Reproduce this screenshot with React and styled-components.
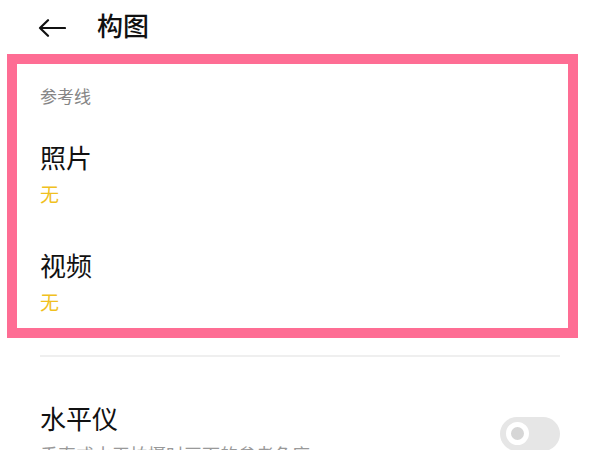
import styled, { createGlobalStyle } from "styled-components";

const GlobalStyle = createGlobalStyle`
  html, body {
    margin: 0;
    padding: 0;
    background: #ffffff;
  }
  body {
    font-family: "Noto Sans CJK SC", "Noto Sans", sans-serif;
    color: #111111;
    overflow: hidden;
  }
`;

const Page = styled.div`
  width: 600px;
  height: 450px;
  overflow: hidden;
  background: #ffffff;
`;

const Header = styled.header`
  height: 54px;
  display: flex;
  align-items: center;
  padding-left: 38px;
  gap: 31px;
  box-sizing: border-box;
`;

const BackButton = styled.button`
  display: flex;
  align-items: center;
  padding: 0;
  margin-top: 2px;
  border: none;
  background: none;
  cursor: pointer;
`;

const Title = styled.h1`
  margin: 0 0 4px;
  font-size: 26px;
  font-weight: 500;
  line-height: 34px;
  color: #111111;
`;

const Highlight = styled.section`
  margin: 0 22px 0 7px;
  border: 10px solid #fe6d94;
  padding: 20px 23px 13px;
  display: flex;
  flex-direction: column;
`;

const GroupLabel = styled.div`
  font-size: 17px;
  line-height: 24px;
  color: #858585;
  margin-bottom: 32px;
`;

const Option = styled.div`
  display: flex;
  flex-direction: column;
  gap: 7px;
  & + & {
    margin-top: 41px;
  }
`;

const OptionTitle = styled.div`
  font-size: 26px;
  line-height: 34px;
  color: #111111;
`;

const OptionValue = styled.div`
  font-size: 19px;
  line-height: 26px;
  color: #f0c020;
`;

const Divider = styled.hr`
  margin: 17px 40px 0;
  border: none;
  height: 2px;
  background: #efefef;
`;

const ToggleRow = styled.div`
  display: flex;
  align-items: center;
  justify-content: space-between;
  padding: 0 40px;
  margin-top: 44px;
`;

const RowText = styled.div`
  display: flex;
  flex-direction: column;
  gap: 7px;
`;

const RowSub = styled.div`
  font-size: 18px;
  line-height: 24px;
  color: #999999;
  white-space: nowrap;
`;

const Switch = styled.div`
  width: 60px;
  height: 34px;
  border-radius: 17px;
  background: ${(p) => (p.$on ? "#2d7cf6" : "#e6e6e6")};
  display: flex;
  align-items: center;
  padding-left: 6px;
  box-sizing: border-box;
  flex-shrink: 0;
`;

const Knob = styled.div`
  width: 23px;
  height: 23px;
  border-radius: 50%;
  background: #d6d6d6;
  border: 5px solid #ffffff;
  box-sizing: border-box;
`;

const BackArrow = () => (
  <svg width="28" height="18" viewBox="0 0 28 18" fill="none">
    <path
      d="M27 9H2M10 1.2L2 9l8 7.8"
      stroke="#111111"
      strokeWidth="2.2"
      strokeLinecap="round"
      strokeLinejoin="round"
    />
  </svg>
);

const options = [
  { title: "照片", value: "无" },
  { title: "视频", value: "无" },
];

export default function App() {
  return (
    <Page>
      <GlobalStyle />
      <Header>
        <BackButton aria-label="返回">
          <BackArrow />
        </BackButton>
        <Title>构图</Title>
      </Header>
      <Highlight>
        <GroupLabel>参考线</GroupLabel>
        {options.map((o) => (
          <Option key={o.title}>
            <OptionTitle>{o.title}</OptionTitle>
            <OptionValue>{o.value}</OptionValue>
          </Option>
        ))}
      </Highlight>
      <Divider />
      <ToggleRow>
        <RowText>
          <OptionTitle>水平仪</OptionTitle>
          <RowSub>垂直或水平拍摄时画面的参考角度</RowSub>
        </RowText>
        <Switch>
          <Knob />
        </Switch>
      </ToggleRow>
    </Page>
  );
}
